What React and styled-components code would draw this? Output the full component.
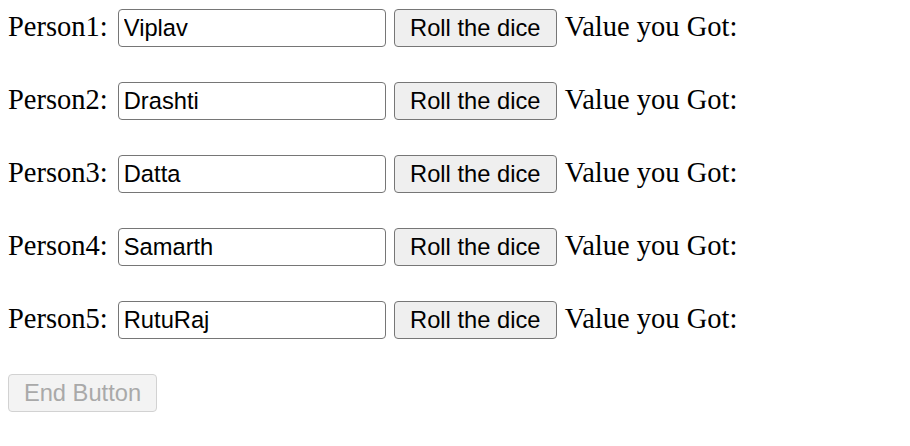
import React from "react";
import styled, { createGlobalStyle } from "styled-components";

const Global = createGlobalStyle`
  html, body { margin: 0; padding: 0; background: #fff; }
  body { font-family: "Liberation Serif", "Times New Roman", serif; color: #000; }
`;

const Page = styled.div`
  padding: 9px 8px 0 8px;
  display: flex;
  flex-direction: column;
  gap: 35px;
`;

const Row = styled.div`
  display: flex;
  align-items: baseline;
  height: 38px;
  font-size: 28.5px;
`;

const Label = styled.label`
  margin-right: 10px;
  white-space: nowrap;
`;

const NameInput = styled.input`
  box-sizing: border-box;
  width: 268px;
  height: 38px;
  margin: 0 8px 0 0;
  padding: 0 5px;
  border: 1px solid #767676;
  border-radius: 4px;
  font-family: "Liberation Sans", Arial, sans-serif;
  font-size: 23.7px;
  color: #000;
  background: #fff;
  outline: none;
`;

const Button = styled.button`
  box-sizing: border-box;
  height: 38px;
  width: ${(p) => p.$w}px;
  margin: 0 8px 0 0;
  padding: 0;
  border: 1px solid ${(p) => (p.disabled ? "#d2d2d2" : "#767676")};
  border-radius: 4px;
  background: ${(p) => (p.disabled ? "#f3f3f3" : "#efefef")};
  color: ${(p) => (p.disabled ? "#a9a9a9" : "#000")};
  font-family: "Liberation Sans", Arial, sans-serif;
  font-size: 23.7px;
  cursor: default;
`;

const Value = styled.span`
  white-space: nowrap;
`;

const people = ["Viplav", "Drashti", "Datta", "Samarth", "RutuRaj"];

export default function App() {
  return (
    <>
      <Global />
      <Page>
        {people.map((name, i) => (
          <Row key={name}>
            <Label>Person{i + 1}:</Label>
            <NameInput defaultValue={name} />
            <Button $w={163}>Roll the dice</Button>
            <Value>Value you Got:</Value>
          </Row>
        ))}
        <Row>
          <Button $w={149} disabled>
            End Button
          </Button>
        </Row>
      </Page>
    </>
  );
}
